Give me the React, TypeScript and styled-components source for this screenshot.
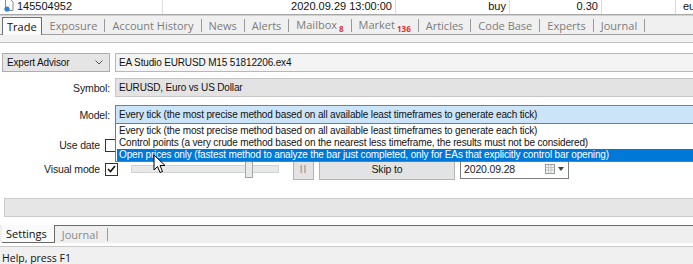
import React from 'react';
import styled, { createGlobalStyle } from 'styled-components';

const Global = createGlobalStyle`
  html, body { margin: 0; padding: 0; background: #fff; overflow: hidden; }
  body { width: 693px; height: 264px; font-family: "Liberation Sans", Arial, sans-serif; }
  * { box-sizing: border-box; }
`;

const Page = styled.div`
  position: relative;
  width: 693px;
  height: 264px;
  display: flex;
  flex-direction: column;
  background: #fff;
  overflow: hidden;
`;

/* ---------- top table row ---------- */
const TopRow = styled.div`
  display: grid;
  grid-template-columns: 163px 233px 114px 92px 74px 1fr;
  height: 15px;
  border-bottom: 1px solid #a8a8a8;
  font-size: 11px;
  color: #111;
`;

const Cell = styled.div<{ $align?: 'left' | 'right' }>`
  display: flex;
  align-items: flex-end;
  justify-content: ${(p) => (p.$align === 'right' ? 'flex-end' : 'flex-start')};
  gap: 3px;
  padding: 0 3px 2px 4px;
  border-right: 1px solid #dcdcdc;
  white-space: nowrap;
  overflow: hidden;
  &:last-child { border-right: none; padding-left: 7px; }
`;

const Divider = styled.div`
  height: 1px;
  background: #d0d0d0;
`;

/* ---------- tabs ---------- */
const TabStrip = styled.div`
  display: flex;
  align-items: stretch;
  height: 22px;
  padding-left: 2px;
  background: #f0f0f0;
  border-bottom: 1px solid #a0a0a0;
  font-family: "Open Sans", "Noto Sans", sans-serif;
  font-size: 11px;
`;

const ActiveTab = styled.div`
  display: flex;
  align-items: center;
  padding: 0 4px 0 4px;
  margin-top: 1px;
  margin-bottom: -1px;
  background: #fbfbfb;
  border: 1px solid #6e6e6e;
  border-bottom: none;
  color: #111;
`;

const TabList = styled.div`
  display: flex;
  align-items: center;
  gap: 7px;
  padding-left: 8px;
  color: #7c7c7c;
`;

const Tab = styled.span`
  white-space: nowrap;
`;

const Badge = styled.sub`
  font-size: 8px;
  font-weight: bold;
  color: #e0303a;
  margin-left: 2px;
  vertical-align: -3px;
`;

const Sep = styled.span`
  width: 1px;
  height: 13px;
  background: #9a9a9a;
`;

const Band = styled.div`
  height: 9px;
  background: #f2f2f2;
  border-bottom: 1px solid #c4c4c4;
`;

/* ---------- form ---------- */
const Form = styled.div`
  display: flex;
  flex-direction: column;
  padding: 10px 0 0 2px;
  font-size: 10px;
  letter-spacing: -0.15px;
  color: #111;
`;

const FieldRow = styled.div<{ $top?: number }>`
  display: grid;
  grid-template-columns: 108px 1fr;
  column-gap: 5px;
  height: 19px;
  margin-top: ${(p) => p.$top ?? 0}px;
`;

const Label = styled.div<{ $w?: number }>`
  flex: none;
  display: flex;
  align-items: center;
  justify-content: flex-end;
  width: ${(p) => (p.$w ? `${p.$w}px` : 'auto')};
  font-size: 10.5px;
  white-space: nowrap;
  color: #1a1a1a;
`;

const SelectBox = styled.div`
  display: flex;
  align-items: center;
  justify-content: space-between;
  padding: 0 6px 0 4px;
  background: #e5e5e5;
  border: 1px solid #adadad;
`;

const Chevron = styled.svg`
  width: 8px;
  height: 5px;
`;

const Input = styled.div<{ $variant?: 'plain' | 'disabled' | 'focus' }>`
  position: relative;
  display: flex;
  align-items: center;
  padding-left: 3px;
  white-space: nowrap;
  border: 1px solid
    ${(p) => (p.$variant === 'focus' ? '#3c8fd6' : p.$variant === 'disabled' ? '#c6c6c6' : '#b8b8b8')};
  border-right: none;
  background: ${(p) =>
    p.$variant === 'focus' ? '#cce4f7' : p.$variant === 'disabled' ? '#e3e3e3' : '#f4f4f4'};
`;

const DropList = styled.div`
  position: absolute;
  top: 100%;
  left: -1px;
  right: 0;
  z-index: 5;
  display: flex;
  flex-direction: column;
  background: #fff;
  border: 1px solid #7a7a7a;
  border-right: none;
  padding: 1px 0 0 1px;
`;

const DropItem = styled.div<{ $selected?: boolean }>`
  height: 12px;
  line-height: 12px;
  padding-left: 2px;
  white-space: nowrap;
  background: ${(p) => (p.$selected ? '#0078d7' : 'transparent')};
  color: ${(p) => (p.$selected ? '#fff' : '#111')};
`;

const InlineRow = styled.div<{ $top?: number; $h: number }>`
  display: flex;
  align-items: center;
  height: ${(p) => p.$h}px;
  margin-top: ${(p) => p.$top ?? 0}px;
`;

const Check = styled.div`
  flex: none;
  width: 13px;
  height: 13px;
  margin-left: 5px;
  display: flex;
  align-items: center;
  justify-content: center;
  background: #fff;
  border: 1px solid #333;
`;

const Slider = styled.div`
  flex: none;
  position: relative;
  width: 148px;
  height: 8px;
  margin-left: 13px;
  background: #e9e9e9;
  border: 1px solid #d2d2d2;
`;

const Thumb = styled.div`
  position: absolute;
  top: -7px;
  width: 8px;
  height: 19px;
  background: #e8e8e8;
  border: 1px solid #a5a5a5;
`;

const Button = styled.div<{ $w: number; $ml: number }>`
  flex: none;
  display: flex;
  align-items: center;
  justify-content: center;
  width: ${(p) => p.$w}px;
  height: 22px;
  margin-left: ${(p) => p.$ml}px;
  background: #e3e3e3;
  border: 1px solid #b4b4b4;
  color: #1a1a1a;
  font-size: 10.5px;
`;

const PauseGlyph = styled.span`
  color: #8a8a8a;
  font-size: 10px;
  letter-spacing: 1px;
`;

const DateBox = styled.div`
  flex: none;
  display: flex;
  align-items: center;
  width: 109px;
  height: 20px;
  margin-left: 5px;
  padding: 0 3px 0 3px;
  background: #fff;
  border: 1px solid #7d7d7d;
  color: #222;
  font-size: 10.5px;
`;

const DateText = styled.span`
  flex: 1;
`;

const Progress = styled.div`
  height: 19px;
  margin: 18px 0 0 2px;
  background: #e6e6e6;
  border: 1px solid #cbcbcb;
  border-right: none;
`;

/* ---------- bottom ---------- */
const BottomTabs = styled.div`
  display: flex;
  align-items: stretch;
  height: 20px;
  margin-top: 8px;
  background: #efefef;
  font-family: "Open Sans", "Noto Sans", sans-serif;
  font-size: 11px;
`;

const BottomActive = styled.div`
  display: flex;
  align-items: center;
  padding: 0 7px 0 4px;
  margin-left: 2px;
  background: #fafafa;
  border-right: 1px solid #6a6a6a;
  border-bottom: 1px solid #6a6a6a;
  color: #111;
`;

const BottomRest = styled.div`
  flex: 1;
  display: flex;
  align-items: center;
  gap: 9px;
  padding-left: 7px;
  border-top: 1px solid #6a6a6a;
  color: #8a8a8a;
`;

const StatusBar = styled.div`
  flex: 1;
  margin-top: 3px;
  padding: 5px 0 0 2px;
  background: #f0f0f0;
  border-top: 1px solid #c8c8c8;
  font-family: "Open Sans", "Noto Sans", sans-serif;
  font-size: 10.5px;
  line-height: 12px;
  color: #111;
  white-space: nowrap;
`;

const Cursor = styled.svg`
  position: absolute;
  left: 153px;
  top: 154px;
  width: 13px;
  height: 20px;
  z-index: 10;
`;

const DocIcon = () => (
  <svg width="10" height="13" viewBox="0 0 10 13">
    <path d="M1.5 0.5 H6.5 L9 3 V11.5 H1.5 Z" fill="#fff" stroke="#8a8a8a" />
    <circle cx="3" cy="10" r="2.6" fill="#2f7fd6" />
  </svg>
);

const tabs: { name: string; badge?: string }[] = [
  { name: 'Exposure' },
  { name: 'Account History' },
  { name: 'News' },
  { name: 'Alerts' },
  { name: 'Mailbox', badge: '8' },
  { name: 'Market', badge: '136' },
  { name: 'Articles' },
  { name: 'Code Base' },
  { name: 'Experts' },
  { name: 'Journal' },
];

export default function App() {
  return (
    <Page>
      <Global />
      <TopRow>
        <Cell>
          <DocIcon />
          <span>145504952</span>
        </Cell>
        <Cell $align="right">2020.09.29 13:00:00</Cell>
        <Cell $align="right">buy</Cell>
        <Cell $align="right">0.30</Cell>
        <Cell />
        <Cell>eu</Cell>
      </TopRow>
      <Divider />
      <TabStrip>
        <ActiveTab>Trade</ActiveTab>
        <TabList>
          {tabs.map((t) => (
            <React.Fragment key={t.name}>
              <Tab>
                {t.name}
                {t.badge && <Badge>{t.badge}</Badge>}
              </Tab>
              <Sep />
            </React.Fragment>
          ))}
        </TabList>
      </TabStrip>
      <Band />
      <Form>
        <FieldRow>
          <SelectBox>
            <span>Expert Advisor</span>
            <Chevron viewBox="0 0 8 5">
              <path d="M0.5 0.5 L4 4 L7.5 0.5" fill="none" stroke="#555" />
            </Chevron>
          </SelectBox>
          <Input>EA Studio EURUSD M15 51812206.ex4</Input>
        </FieldRow>
        <FieldRow $top={6}>
          <Label>Symbol:</Label>
          <Input $variant="disabled">EURUSD, Euro vs US Dollar</Input>
        </FieldRow>
        <FieldRow $top={8}>
          <Label>Model:</Label>
          <Input $variant="focus">
            Every tick (the most precise method based on all available least timeframes to generate each tick)
            <DropList>
              <DropItem>
                Every tick (the most precise method based on all available least timeframes to generate each tick)
              </DropItem>
              <DropItem>
                Control points (a very crude method based on the nearest less timeframe, the results must not be considered)
              </DropItem>
              <DropItem $selected>
                Open prices only (fastest method to analyze the bar just completed, only for EAs that explicitly control bar opening)
              </DropItem>
            </DropList>
          </Input>
        </FieldRow>
        <InlineRow $top={14} $h={14}>
          <Label $w={98}>Use date</Label>
          <Check />
        </InlineRow>
        <InlineRow $top={6} $h={22}>
          <Label $w={98}>Visual mode</Label>
          <Check>
            <svg width="9" height="8" viewBox="0 0 9 8">
              <path d="M1 4 L3.5 6.5 L8 1" fill="none" stroke="#111" strokeWidth="1.6" />
            </svg>
          </Check>
          <Slider>
            <Thumb style={{ left: 113 }} />
          </Slider>
          <Button $w={21} $ml={14}>
            <PauseGlyph>II</PauseGlyph>
          </Button>
          <Button $w={136} $ml={5}>Skip to</Button>
          <DateBox>
            <DateText>2020.09.28</DateText>
            <svg width="20" height="10" viewBox="0 0 20 10">
              <rect x="0.5" y="0.5" width="9" height="9" fill="#f4f4f4" stroke="#9a9a9a" />
              <path d="M1 3.5 H9 M1 6 H9 M3.5 1 V9 M6 1 V9" stroke="#c4c4c4" />
              <path d="M13 3 L19 3 L16 7 Z" fill="#444" />
            </svg>
          </DateBox>
        </InlineRow>
        <Progress />
      </Form>
      <BottomTabs>
        <BottomActive>Settings</BottomActive>
        <BottomRest>
          <span>Journal</span>
          <Sep />
        </BottomRest>
      </BottomTabs>
      <StatusBar>Help, press F1</StatusBar>
      <Cursor viewBox="0 0 13 20">
        <path d="M1 1 L1 16 L4.5 12.5 L7 18.5 L9.5 17.5 L7 11.5 L12 11.5 Z" fill="#fff" stroke="#000" strokeWidth="1" strokeLinejoin="round" />
      </Cursor>
    </Page>
  );
}
